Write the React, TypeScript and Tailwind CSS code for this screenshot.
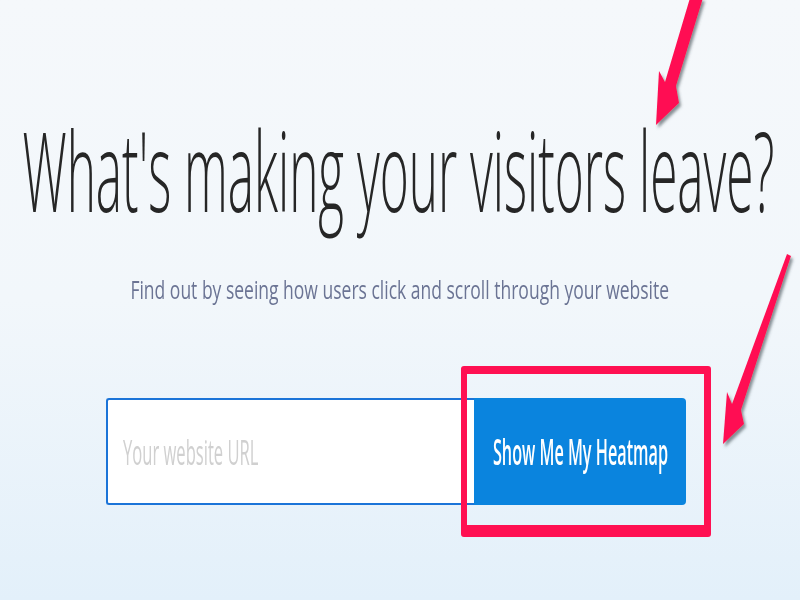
export default function App() {
  return (
    <div className="relative h-[600px] w-[800px] overflow-hidden bg-gradient-to-b from-[#f5f8fb] via-[#f2f7fb] to-[#e3f0fa] [font-family:'Open_Sans',sans-serif]">
      <div className="flex flex-col items-center pt-[114px]">
        <h1 className="ml-[-4px] whitespace-nowrap text-[110px] font-light leading-none text-[#262626] scale-x-[0.45]">
          What's making your visitors leave?
        </h1>
        <p className="mt-[53px] whitespace-nowrap text-[25px] leading-none text-[#6b7494] scale-x-[0.7]">
          Find out by seeing how users click and scroll through your website
        </p>
        <div className="mt-[96px] mr-[8px] flex h-[107px]">
          <div className="flex w-[368px] items-center rounded-l-[3px] border-2 border-r-0 border-[#1b74d8] bg-white pl-[15px]">
            <span className="inline-block origin-left whitespace-nowrap text-[35px] leading-none text-[#d0d0d0] scale-x-[0.474]">
              Your website URL
            </span>
          </div>
          <button className="flex w-[212px] items-center justify-center rounded-r-[4px] bg-[#0a84de] text-white">
            <span className="inline-block whitespace-nowrap text-[36px] font-semibold leading-none scale-x-[0.45]">
              Show Me My Heatmap
            </span>
          </button>
        </div>
      </div>

      <div className="pointer-events-none absolute left-[461px] top-[366px] h-[171px] w-[250px] rounded-[3px] border-b-[12px] border-l-[6px] border-r-[7px] border-t-[8px] border-[#ff1052]" />

      <svg
        className="pointer-events-none absolute left-0 top-0"
        width="800"
        height="600"
        viewBox="0 0 800 600"
      >
        <defs>
          <filter id="sh" x="-20%" y="-20%" width="140%" height="140%">
            <feDropShadow dx="2" dy="3" stdDeviation="1.5" floodColor="#3a4a50" floodOpacity="0.6" />
          </filter>
        </defs>
        <polygon
          points="690,-2 703,-2 676,86 679,103 656,125 659,71 665,82"
          fill="#ff1052"
          filter="url(#sh)"
        />
        <polygon
          points="787,254 791,256 741,410 744,424 723,444 727,392 732,404"
          fill="#ff1052"
          filter="url(#sh)"
        />
      </svg>
    </div>
  );
}
